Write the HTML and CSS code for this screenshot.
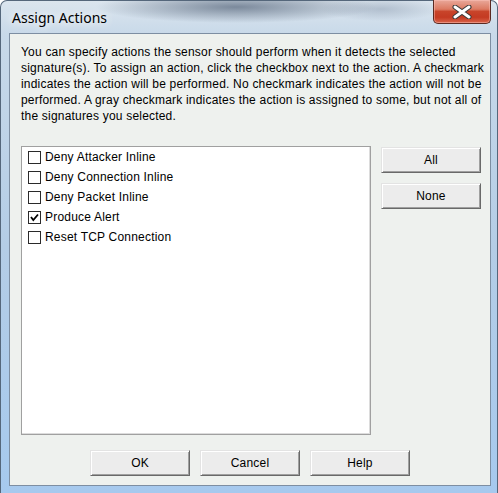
FILE: index.html
```html
<!DOCTYPE html>
<html>
<head>
<meta charset="utf-8">
<link rel="stylesheet" href="styles.css">
</head>
<body>
<div class="window">
  <div class="titlebar">
    <span class="title">Assign Actions</span>
    <button class="close" aria-label="Close">
      <svg width="20" height="14" viewBox="0 0 20 14">
        <path d="M3 2 L17 12 M3 12 L17 2" stroke="#3a3a3a" stroke-width="5" stroke-linecap="round" fill="none"/>
        <path d="M3 2 L17 12 M3 12 L17 2" stroke="#ffffff" stroke-width="3" stroke-linecap="round" fill="none"/>
      </svg>
    </button>
  </div>
  <div class="client">
    <p class="desc">You can specify actions the sensor should perform when it detects the selected<br>signature(s). To assign an action, click the checkbox next to the action. A checkmark<br>indicates the action will be performed. No checkmark indicates the action will not be<br>performed. A gray checkmark indicates the action is assigned to some, but not all of<br>the signatures you selected.</p>
    <div class="middle">
      <div class="list">
        <div class="row"><span class="box"></span><span>Deny Attacker Inline</span></div>
        <div class="row"><span class="box"></span><span>Deny Connection Inline</span></div>
        <div class="row"><span class="box"></span><span>Deny Packet Inline</span></div>
        <div class="row"><span class="box"><svg width="11" height="11" viewBox="0 0 11 11"><path d="M2 5 L4.3 8 L9 2.5" stroke="#000" stroke-width="1.8" fill="none"/></svg></span><span>Produce Alert</span></div>
        <div class="row"><span class="box"></span><span>Reset TCP Connection</span></div>
      </div>
      <div class="side">
        <button class="btn">All</button>
        <button class="btn">None</button>
      </div>
    </div>
    <div class="footer">
      <button class="btn">OK</button>
      <button class="btn">Cancel</button>
      <button class="btn">Help</button>
    </div>
  </div>
</div>
</body>
</html>
```
FILE: styles.css
```css
html, body {
  margin: 0;
  padding: 0;
  background: #ffffff;
}
body {
  width: 498px;
  height: 493px;
  overflow: hidden;
  font-family: "Liberation Sans", Arial, sans-serif;
  font-size: 12px;
  color: #000;
}
.window {
  box-sizing: border-box;
  width: 498px;
  height: 493px;
  border: 1px solid #55677b;
  border-bottom: none;
  border-radius: 7px 7px 0 0;
  padding: 0 6px 7px 8px;
  display: flex;
  flex-direction: column;
  background:
    radial-gradient(ellipse 140px 16px at 235px 6px, rgba(100,115,135,0.8), rgba(100,115,135,0)),
    radial-gradient(ellipse 60px 12px at 380px 8px, rgba(140,155,175,0.5), rgba(140,155,175,0)),
    linear-gradient(to bottom, #dbe5ee 0, #c8d9e9 34px, #b4cde6 50%, #a6c9ee 100%);
}
.titlebar {
  height: 32px;
  display: flex;
  justify-content: space-between;
  align-items: flex-start;
}
.title {
  margin-top: 7px;
  margin-left: 3px;
  font-family: "Segoe UI", "Noto Sans", sans-serif;
  font-size: 14px;
  color: #000;
  text-shadow: 0 0 8px rgba(255,255,255,1), 0 0 12px rgba(255,255,255,0.9);
}
.close {
  margin-top: -1px;
  width: 58px;
  height: 24px;
  padding: 0;
  border: 1px solid #5a2a22;
  border-top: none;
  border-radius: 0 0 5px 5px;
  background: linear-gradient(to bottom, #e9a89a 0, #dc7a62 40%, #c8442a 50%, #c43a22 75%, #d8644a 100%);
  box-shadow: inset 0 0 0 1px rgba(255,200,190,0.45);
  display: flex;
  align-items: center;
  justify-content: center;
}
.client {
  flex: 1;
  border: 1px solid #7d8ea2;
  background: #eef1ee;
  padding: 10px 9px 9px 11px;
  display: flex;
  flex-direction: column;
  letter-spacing: 0.2px;
}
.desc {
  margin: 0;
  line-height: 16px;
  white-space: nowrap;
}
.middle {
  margin-top: 22px;
  height: 289px;
  display: flex;
  gap: 10px;
}
.list {
  box-sizing: border-box;
  width: 350px;
  height: 289px;
  background: #fff;
  border: 1px solid #a0a0a0;
  box-shadow: inset -1px -1px 0 #dcdcdc;
}
.row {
  height: 20px;
  display: flex;
  align-items: center;
  padding-left: 6px;
  gap: 4px;
}
.box {
  box-sizing: border-box;
  width: 13px;
  height: 13px;
  border: 1px solid #2a2a2a;
  background: #fff;
  display: flex;
  align-items: center;
  justify-content: center;
}
.side {
  display: flex;
  flex-direction: column;
  gap: 10px;
  padding-top: 1px;
}
.btn {
  box-sizing: border-box;
  width: 100px;
  height: 26px;
  padding: 0;
  font-family: "Liberation Sans", Arial, sans-serif;
  font-size: 12px;
  letter-spacing: 0.2px;
  color: #000;
  background: #ececec;
  border: 1px solid;
  border-color: #e3e3e3 #696969 #696969 #e3e3e3;
  box-shadow: inset 1px 1px 0 #ffffff, inset -1px -1px 0 #a0a0a0;
}
.footer {
  margin-top: 15px;
  display: flex;
  justify-content: center;
  gap: 10px;
  padding-right: 2px;
}
```
